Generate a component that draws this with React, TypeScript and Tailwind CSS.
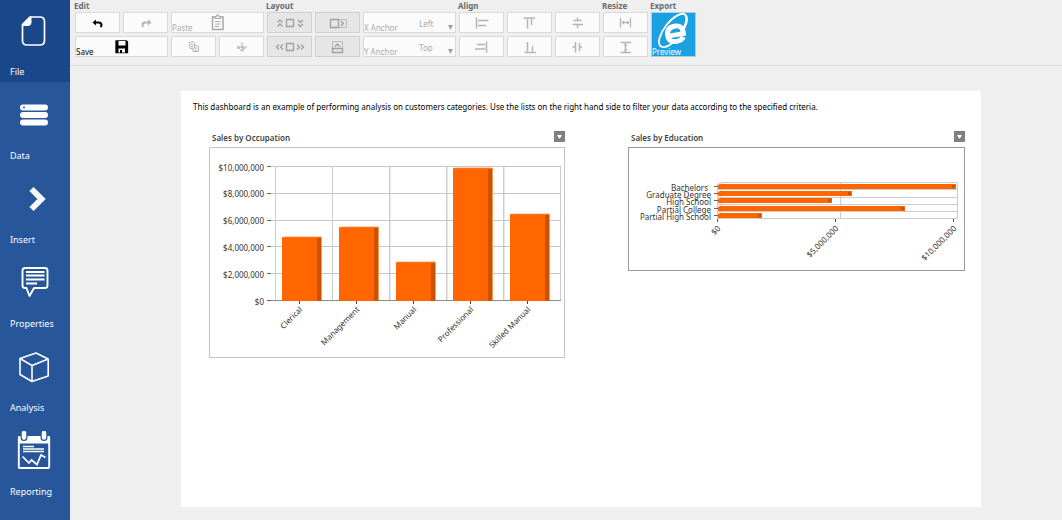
import React from 'react';

const FileIcon = () => (
  <svg width="30" height="34" viewBox="0 0 30 34" fill="none" aria-hidden="true">
    <path d="M11 1H21Q25.500 1 25.500 5.500V24.500Q25.500 29 21 29H8Q3.500 29 3.500 24.500V8.500Z" stroke="white" strokeWidth="1.700" strokeLinejoin="round" />
    <path d="M12.500 0.500V6Q12.500 10 8.500 10H3V8.500L11 0.500Z" fill="white" />
  </svg>
);

const DataIcon = () => (
  <svg width="30" height="34" viewBox="0 0 30 34" aria-hidden="true">
    <rect x="1" y="5.600" width="28" height="6" rx="3" fill="white" />
    <rect x="1" y="13" width="28" height="6" rx="3" fill="white" />
    <rect x="1" y="20.400" width="28" height="6" rx="3" fill="white" />
    <circle cx="5" cy="8.500" r="1" fill="#28569b" />
  </svg>
);

const InsertIcon = () => (
  <svg width="30" height="34" viewBox="0 0 30 34" fill="none" aria-hidden="true">
    <path d="M12.500 6L22.500 16L12.500 26" stroke="#f7f7f7" strokeWidth="6" />
  </svg>
);

const PropertiesIcon = () => (
  <svg width="30" height="34" viewBox="0 0 30 34" fill="none" stroke="white" aria-hidden="true">
    <path d="M6 1H26Q28.500 1 28.500 3.500V18.500Q28.500 21 26 21H15L10.500 29L7.500 21H6Q3.500 21 3.500 18.500V3.500Q3.500 1 6 1Z" strokeWidth="1.900" strokeLinejoin="round" />
    <path d="M7 5H25.500M7 8.500H25.500M7 12.500H25.500M7 16.500H18" strokeWidth="1.900" />
  </svg>
);

const AnalysisIcon = () => (
  <svg width="30" height="34" viewBox="0 0 30 34" fill="none" stroke="white" strokeWidth="1.600" strokeLinejoin="round" aria-hidden="true">
    <path d="M1 7.500L17 2L29.200 8V25L13 30.500L1 23.500ZM1 7.500L13 14.500L29.200 8M13 14.500V30.500" />
  </svg>
);

const ReportingIcon = () => (
  <svg width="34" height="42" viewBox="0 0 34 42" fill="none" aria-hidden="true">
    <rect x="1.800" y="6" width="30.400" height="31" rx="1" stroke="white" strokeWidth="1.900" />
    <path d="M1.500 5H32.500V12.500H1.500Z" fill="white" />
    <path d="M7 1V6.500M27 1V6.500" stroke="#28569b" strokeWidth="7" strokeLinecap="round" />
    <path d="M7 2V6.500M27 2V6.500" stroke="white" strokeWidth="4.500" strokeLinecap="round" />
    <path d="M6 15.500H17M6 18H27M6 20.500H27" stroke="white" strokeWidth="1.300" />
    <path d="M5.500 25.500L12 32L14.500 29L20 33.500L24 24L28.500 26.500" stroke="white" strokeWidth="1.700" />
  </svg>
);

const navItems = [
  { label: 'File', icon: <FileIcon />, active: true },
  { label: 'Data', icon: <DataIcon /> },
  { label: 'Insert', icon: <InsertIcon /> },
  { label: 'Properties', icon: <PropertiesIcon /> },
  { label: 'Analysis', icon: <AnalysisIcon /> },
  { label: 'Reporting', icon: <ReportingIcon /> },
];

const Sidebar: React.FC = () => (
  <nav className="w-[70px] shrink-0 bg-[#28569b]">
    {navItems.map((item) => (
      <button
        key={item.label}
        type="button"
        className={`flex w-full flex-col pb-1 text-left text-[9px] leading-3 text-white ${item.active ? 'h-[82px] bg-[#19478a]' : 'h-[84px]'}`}
      >
        <span className="flex flex-1 items-center justify-center pr-[2px]">{item.icon}</span>
        <span className="pl-[10px]">{item.label}</span>
      </button>
    ))}
  </nav>
);

const Glyph: React.FC<{ children: React.ReactNode; color?: string; width?: number }> = ({ children, color = '#b4b4b4', width = 1.3 }) => (
  <svg width="36" height="18" viewBox="0 0 36 18" fill="none" stroke={color} strokeWidth={width} aria-hidden="true">
    {children}
  </svg>
);

interface ToolButtonProps {
  label: string;
  children: React.ReactNode;
  wide?: boolean;
  caption?: string;
  tone?: string;
  disabled?: boolean;
}

const ToolButton: React.FC<ToolButtonProps> = ({ label, children, wide, caption, tone = 'border-[#dadada] bg-[#fbfbfb]', disabled }) => (
  <button
    type="button"
    aria-label={label}
    disabled={disabled}
    className={`relative flex h-[21px] items-center justify-center border ${tone} ${wide ? 'col-span-2' : ''}`}
  >
    {children}
    {caption && <span className={`absolute bottom-0 left-0 text-[8px] leading-[8px] ${disabled ? 'text-[#aaaaaa]' : 'text-black'}`}>{caption}</span>}
  </button>
);

const Group: React.FC<{ title: string; columns: string; children: React.ReactNode }> = ({ title, columns, children }) => (
  <section>
    <h2 className="-ml-px h-3 text-[8px] leading-3 font-bold text-[#6b6b6b]">{title}</h2>
    <div className={`grid gap-[3px] ${columns}`}>{children}</div>
  </section>
);

const AnchorSelect: React.FC<{ id: string; label: string; options: string[] }> = ({ id, label, options }) => (
  <div className="relative flex h-[21px] items-end border border-[#dadada] bg-[#fbfbfb] text-[8px] leading-[8px] text-[#aaaaaa]">
    <label htmlFor={id} className="w-[55px]">{label}</label>
    <select id={id} disabled className="h-full flex-1 appearance-none bg-transparent pt-[2px] opacity-100">
      {options.map((option) => (
        <option key={option}>{option}</option>
      ))}
    </select>
    <svg width="5" height="5" viewBox="0 0 5 5" className="absolute right-[2px] bottom-[2px]" aria-hidden="true">
      <path d="M0 0H5L2.500 5Z" fill="#a0a0a0" />
    </svg>
  </div>
);

const grayTone = 'border-[#cfcfcf] bg-[#e6e6e6]';

const Toolbar: React.FC = () => (
  <header className="flex h-[66px] shrink-0 gap-[3px] border-b border-[#dcdcdc] pl-[5px]">
    <Group title="Edit" columns="grid-cols-[45px_45px_45px_45px]">
      <ToolButton label="Undo">
        <Glyph color="#000" width={2}>
          <path d="M14.500 8.500H18.500Q21.500 8.500 21.500 11Q21.500 12 20.500 13" />
          <path d="M12.500 8.500L16 5.500V11.500Z" fill="#000" stroke="none" />
        </Glyph>
      </ToolButton>
      <ToolButton label="Redo" disabled>
        <Glyph width={1.8}>
          <path d="M21 8.500H17.500Q14.500 8.500 14.500 11Q14.500 12 15.500 13" />
          <path d="M23.500 8.500L20 5.500V11.500Z" fill="#b4b4b4" stroke="none" />
        </Glyph>
      </ToolButton>
      <ToolButton label="Paste" caption="Paste" wide disabled>
        <Glyph color="#a8a8a8" width={1.5}>
          <path d="M15 3H12.500V15.500H23V3H20.500" />
          <path d="M15 4.500V2.500H16.500L17 1H18.500L19 2.500H20.500V4.500Z" strokeWidth="1.200" />
          <path d="M15 7.500H20.500M15 10H20.500M15 12.500H19" strokeWidth="1" />
        </Glyph>
      </ToolButton>
      <ToolButton label="Save" caption="Save" wide>
        <Glyph color="#000">
          <path d="M12 3H22.500L23.500 4V14.500H12Z" fill="#000" />
          <path d="M14.500 3H21.500V7.500H14.500Z" fill="#fbfbfb" stroke="none" />
          <path d="M14.500 10.500H21V14.500H14.500Z" fill="#fbfbfb" stroke="none" />
          <path d="M17 12V15" strokeWidth="2" />
        </Glyph>
      </ToolButton>
      <ToolButton label="Copy" disabled>
        <Glyph width={1}>
          <path d="M13.500 4.500L17 3.500L18.500 5V10L14 10.500ZM17.500 7.500H20.500L22.500 8.500V13.500H17V10.500M15 6.500H17M15 8.500H17M18.500 10H21M18.500 12H21" />
        </Glyph>
      </ToolButton>
      <ToolButton label="Cut" disabled>
        <Glyph width={1.2}>
          <path d="M18 4.500V10M23 9H15M18 9L21 11" />
          <circle cx="14.500" cy="9.500" r="1" />
          <circle cx="18" cy="12" r="1" />
        </Glyph>
      </ToolButton>
    </Group>

    <Group title="Layout" columns="grid-cols-[45px_45px_93px]">
      <ToolButton label="Stretch vertically" tone={grayTone} disabled>
        <Glyph color="#a0a0a0">
          <path d="M14.500 5.500H21.500V12.500H14.500Z" />
          <path d="M5.500 8.500L8 6L10.500 8.500M5.500 12.500L8 10L10.500 12.500M26 6L28.500 8.500L31 6M26 10L28.500 12.500L31 10" />
        </Glyph>
      </ToolButton>
      <ToolButton label="Dock right" tone={grayTone} disabled>
        <Glyph color="#a0a0a0">
          <path d="M10.500 5.500H18.500V13.500H10.500Z" />
          <path d="M18.500 5.500H26.500V13.500H18.500" strokeWidth="0.600" />
          <path d="M21 7L23.500 9.500L21 12" />
        </Glyph>
      </ToolButton>
      <AnchorSelect id="x-anchor" label="X Anchor" options={['Left', 'Right']} />
      <ToolButton label="Stretch horizontally" tone={grayTone} disabled>
        <Glyph color="#a0a0a0">
          <path d="M14.500 5.500H21.500V12.500H14.500Z" />
          <path d="M7 6.500L4.500 9L7 11.500M11 6.500L8.500 9L11 11.500M25 6.500L27.500 9L25 11.500M29 6.500L31.500 9L29 11.500" />
        </Glyph>
      </ToolButton>
      <ToolButton label="Dock bottom" tone={grayTone} disabled>
        <Glyph color="#a0a0a0">
          <path d="M12.500 10.500H22.500V14.500H12.500Z" />
          <path d="M12.500 10.500V3.500H22.500V10.500" strokeWidth="0.600" />
          <path d="M15 8.500L17.500 6L20 8.500" />
        </Glyph>
      </ToolButton>
      <AnchorSelect id="y-anchor" label="Y Anchor" options={['Top', 'Bottom']} />
    </Group>

    <Group title="Align" columns="grid-cols-[45px_45px_45px]">
      <ToolButton label="Align left" disabled>
        <Glyph><path d="M12.500 3.500V14.500M14 6.500H24.500M14 11.500H22" strokeWidth="1.500" /></Glyph>
      </ToolButton>
      <ToolButton label="Align top" disabled>
        <Glyph><path d="M11.500 4H23M15.500 5V14.500M19.500 5V11" strokeWidth="1.500" /></Glyph>
      </ToolButton>
      <ToolButton label="Align middle" disabled>
        <Glyph><path d="M13.500 6.500H21.500M12.500 10.500H23M17.500 3.500V6.500M17.500 10.500V14" strokeWidth="1.500" /></Glyph>
      </ToolButton>
      <ToolButton label="Align right" disabled>
        <Glyph><path d="M22.500 3.500V14.500M13 6.500H21M11 11H21" strokeWidth="1.500" /></Glyph>
      </ToolButton>
      <ToolButton label="Align bottom" disabled>
        <Glyph><path d="M12.500 14.500H24M15.500 4V13.500M20.500 8V13.500" strokeWidth="1.500" /></Glyph>
      </ToolButton>
      <ToolButton label="Align center" disabled>
        <Glyph><path d="M15.500 4V14.500M19.500 5V13M12.500 9H15.500M19.500 9H22" strokeWidth="1.500" /></Glyph>
      </ToolButton>
    </Group>

    <Group title="Resize" columns="grid-cols-[45px]">
      <ToolButton label="Same width" disabled>
        <Glyph>
          <path d="M12.500 4V13.500M22.500 4V13.500M14 8.500H21" />
          <path d="M13.500 8.500L16 6.500V10.500ZM21.500 8.500L19 6.500V10.500Z" fill="#b4b4b4" stroke="none" />
        </Glyph>
      </ToolButton>
      <ToolButton label="Same height" disabled>
        <Glyph>
          <path d="M12.500 4.500H23M12.500 14.500H23M17.500 6V14" />
          <path d="M17.500 5L15.500 7.500H19.500ZM17.500 14L15.500 11.500H19.500Z" fill="#b4b4b4" stroke="none" />
        </Glyph>
      </ToolButton>
    </Group>

    <Group title="Export" columns="grid-cols-[45px]">
      <button type="button" className="relative h-[45px] border border-[#a9cfe4] bg-[#1ba1e2]">
        <svg viewBox="0 0 43 43" width="43" height="43" fill="none" stroke="white" aria-hidden="true">
          <ellipse cx="21" cy="17.500" rx="20" ry="8.500" transform="rotate(-52 21 17.500)" strokeWidth="1.800" />
          <circle cx="24" cy="21" r="9" fill="#1ba1e2" stroke="none" />
          <path d="M16.500 23L31.500 20.500Q31 12.500 23.500 13Q15 14 15.500 22Q16.500 29.500 24.500 28.500Q29.500 27.500 31.500 24" strokeWidth="4.800" />
          <path d="M33.300 2.500Q36 9 28 20" strokeWidth="1.200" />
        </svg>
        <span className="absolute bottom-0 left-0 text-[8px] leading-[8px] text-white">Preview</span>
      </button>
    </Group>
  </header>
);

const occupations = [
  { name: 'Clerical', height: 64 },
  { name: 'Management', height: 74 },
  { name: 'Manual', height: 39 },
  { name: 'Professional', height: 133 },
  { name: 'Skilled Manual', height: 87 },
];

const OccupationChart: React.FC = () => (
  <svg viewBox="0 0 354 209" className="block w-full" fontSize="8" fill="#333" role="img" aria-label="Sales by Occupation">
    <g fill="none">
      <path d="M180.500 19V152M237.500 19V152M294.500 19V152" stroke="#e8e8e8" />
      <path d="M65.500 18.500V152M122.500 18.500V152M179.500 18.500V152M236.500 18.500V152M293.500 18.500V152M350.500 18.500V152" stroke="#cccccc" />
      <path d="M61 18.500H351M61 45.500H351M61 72.500H351M61 98.500H351M61 125.500H351" stroke="#c6c6c6" />
      <path d="M61 152.500H351" stroke="#8c8c8c" />
    </g>
    {['$10,000,000', '$8,000,000', '$6,000,000', '$4,000,000', '$2,000,000', '$0'].map((label, i) => (
      <g key={label}>
        <text x="54" y={22.5 + i * 26.8} textAnchor="end">{label}</text>
        <path d={`M57 ${Math.floor(18.5 + i * 26.8) + 0.5}H61`} stroke="#666" />
      </g>
    ))}
    {occupations.map((bar, i) => {
      const x = 72 + i * 57;
      const top = 153 - bar.height;
      return (
        <g key={bar.name}>
          <rect x={x} y={top} width="39.500" height={bar.height} fill="#ff6600" />
          <rect x={x + 35} y={top + 1} width="4" height={bar.height - 1} fill="#cc5200" />
          <path d={`M${x} ${top + 0.5}L${x + 4} ${top}H${x + 39.5}V152`} fill="none" stroke="#ff8b3d" strokeWidth="0.700" />
          <path d={`M${x + 17.5} 153V156`} stroke="#444" />
          <text textAnchor="end" transform={`translate(${x + 21} 162) rotate(-45)`}>{bar.name}</text>
        </g>
      );
    })}
  </svg>
);

const educations = [
  { name: 'Bachelors', length: 238 },
  { name: 'Graduate Degree', length: 134 },
  { name: 'High School', length: 114 },
  { name: 'Partial College', length: 187 },
  { name: 'Partial High School', length: 44 },
];

const EducationChart: React.FC = () => (
  <svg viewBox="0 0 335 122" className="block w-full" fontSize="8" fill="#333" role="img" aria-label="Sales by Education">
    <g fill="none" stroke="#cccccc">
      <path d="M92.500 34.500H328.500V70.500H88.500V36.500L92.500 34.500V69L88.500 70.500" />
      <path d="M89 41.500H328M89 49.500H328M89 56.500H328M89 63.500H328M211.500 34.500V70" />
    </g>
    {educations.map((bar, i) => {
      const y = 36 + Math.round(i * 7.2);
      return (
        <g key={bar.name}>
          <path d={`M85 ${y + 2.5}H89`} stroke="#666" />
          <path d={`M89 ${y + 1}L91 ${y}H${89 + bar.length}V${y + 5}H89Z`} fill="#ff6600" />
          <rect x={85 + bar.length} y={y + 1} width="3" height="3" fill="#cc5200" />
          <text x={i === 0 ? 79 : 82} y={y + 6.5} textAnchor="end">{bar.name}</text>
        </g>
      );
    })}
    {['$0', '$5,000,000', '$10,000,000'].map((label, i) => (
      <g key={label}>
        <path d={`M${88.5 + i * 118} 71V74`} stroke="#555" />
        <text textAnchor="end" transform={`translate(${92 + i * 118} 81) rotate(-45)`}>{label}</text>
      </g>
    ))}
  </svg>
);

const ChartPanel: React.FC<{ title: string; border: string; children: React.ReactNode }> = ({ title, border, children }) => (
  <section>
    <div className="flex h-4 items-start justify-between">
      <h3 className="pl-[3px] text-[8px] leading-[14px] font-semibold text-[#444444]">{title}</h3>
      <button type="button" aria-label={`${title} menu`} className="flex h-[11px] w-[11px] items-center justify-center bg-[#808080]">
        <svg width="5" height="4" viewBox="0 0 5 4" aria-hidden="true">
          <path d="M0 0H5L2.500 4Z" fill="white" />
        </svg>
      </button>
    </div>
    <div className={`border ${border}`}>{children}</div>
  </section>
);

const Dashboard: React.FC = () => (
  <main className="flex flex-1 flex-col pt-[25px] pr-[81px] pb-[13px] pl-[111px]">
    <div className="flex-1 bg-white">
      <p className="pt-[10px] pl-3 text-[8px] leading-3 text-black">
        This dashboard is an example of performing analysis on customers categories. Use the lists on the right hand side to filter your data according to the specified criteria.
      </p>
      <div className="grid grid-cols-[356fr_337fr] items-start gap-[63px] pt-[18px] pr-4 pl-[28px]">
        <ChartPanel title="Sales by Occupation" border="border-[#c4c4c4]">
          <OccupationChart />
        </ChartPanel>
        <ChartPanel title="Sales by Education" border="border-[#9a9a9a]">
          <EducationChart />
        </ChartPanel>
      </div>
    </div>
  </main>
);

const App: React.FC = () => (
  <div className="flex min-h-screen bg-[#efefef] font-['Noto_Sans','Open_Sans',sans-serif]">
    <Sidebar />
    <div className="flex min-w-0 flex-1 flex-col">
      <Toolbar />
      <Dashboard />
    </div>
  </div>
);

export default App;
